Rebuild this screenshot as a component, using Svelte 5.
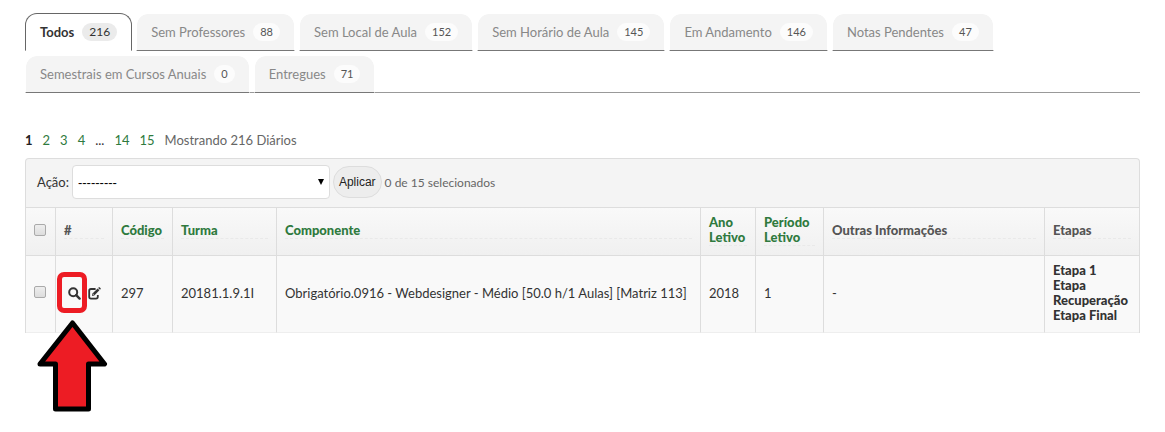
<script lang="ts">
  interface Tab {
    label: string;
    count: number;
  }

  const tabs: Tab[] = [
    { label: 'Todos', count: 216 },
    { label: 'Sem Professores', count: 88 },
    { label: 'Sem Local de Aula', count: 152 },
    { label: 'Sem Horário de Aula', count: 145 },
    { label: 'Em Andamento', count: 146 },
    { label: 'Notas Pendentes', count: 47 },
    { label: 'Semestrais em Cursos Anuais', count: 0 },
    { label: 'Entregues', count: 71 }
  ];

  const columns = [
    { key: 'codigo', label: 'Código', sortable: true },
    { key: 'turma', label: 'Turma', sortable: true },
    { key: 'componente', label: 'Componente', sortable: true },
    { key: 'ano', label: 'Ano Letivo', sortable: true },
    { key: 'periodo', label: 'Período Letivo', sortable: true },
    { key: 'outras', label: 'Outras Informações', sortable: false },
    { key: 'etapas', label: 'Etapas', sortable: false }
  ];

  const diarios = [
    {
      codigo: '297',
      turma: '20181.1.9.1I',
      componente: 'Obrigatório.0916 - Webdesigner - Médio [50.0 h/1 Aulas] [Matriz 113]',
      ano: '2018',
      periodo: '1',
      outras: '-',
      etapas: ['Etapa 1', 'Etapa Recuperação', 'Etapa Final']
    }
  ];

  const pages = ['2', '3', '4', '...', '14', '15'];

  let activeTab = $state('Todos');
</script>

<main class="page">
  <nav class="tabs" aria-label="Situação">
    {#each tabs as tab}
      <a
        class="tab"
        class:active={activeTab === tab.label}
        href="#tab"
        onclick={(e) => { e.preventDefault(); activeTab = tab.label; }}
      >
        {tab.label}
        <span class="count">{tab.count}</span>
      </a>
    {/each}
  </nav>

  <div class="paginator">
    <strong>1</strong>
    {#each pages as page}
      {#if page === '...'}
        <span>...</span>
      {:else}
        <a href="?p={page}">{page}</a>
      {/if}
    {/each}
    <span class="total">Mostrando 216 Diários</span>
  </div>

  <form class="results" onsubmit={(e) => e.preventDefault()}>
    <div class="actions">
      <label for="action">Ação:</label>
      <span class="select-box">
        <select id="action">
          <option>---------</option>
        </select>
      </span>
      <button type="submit">Aplicar</button>
      <span class="selected">0 de 15 selecionados</span>
    </div>

    <table>
      <colgroup>
        <col class="c-check" />
        <col class="c-tools" />
        <col class="c-codigo" />
        <col class="c-turma" />
        <col class="c-componente" />
        <col class="c-ano" />
        <col class="c-periodo" />
        <col class="c-outras" />
        <col class="c-etapas" />
      </colgroup>
      <thead>
        <tr>
          <th class="check"><input type="checkbox" aria-label="Selecionar todos" /></th>
          <th><div class="head">#</div></th>
          {#each columns as column}
            <th>
              <div class="head">
                {#if column.sortable}
                  <a href="?o={column.key}">{column.label}</a>
                {:else}
                  {column.label}
                {/if}
              </div>
            </th>
          {/each}
        </tr>
      </thead>
      <tbody>
        {#each diarios as diario, i}
          <tr>
            <td class="check"><input type="checkbox" aria-label="Selecionar diário {diario.codigo}" /></td>
            <td class="tools">
              <div class="icons">
                <a href="#ver" aria-label="Visualizar">
                  <svg width="13" height="13" viewBox="0 0 13 13" fill="none" stroke="currentColor">
                    <circle cx="5.2" cy="5.2" r="4" stroke-width="2" />
                    <path d="M8.2 8.2L11.6 11.6" stroke-width="2.4" stroke-linecap="round" />
                  </svg>
                </a>
                <a href="#editar" aria-label="Editar">
                  <svg width="13" height="13" viewBox="0 0 13 13" fill="none" stroke="currentColor">
                    <path d="M7.6 2H3Q1.2 2 1.2 3.8V9.8Q1.2 11.6 3 11.6H8Q9.8 11.6 9.8 9.8V8" stroke-width="1.8" />
                    <path d="M4 9L4.5 6.6L9.6 1.5L11.4 3.3L6.3 8.5Z" fill="currentColor" stroke="none" />
                    <path d="M5.2 7L6.1 7.9" stroke="#f9f9f9" stroke-width="0.8" />
                    <path d="M10.2 0.9L10.8 0.3Q11.2 0 11.6 0.3L12.6 1.3Q12.9 1.7 12.6 2.1L12 2.7Z" fill="currentColor" stroke="none" />
                  </svg>
                </a>
              </div>
              {#if i === 0}
                <span class="mark"></span>
                <svg class="arrow" width="72" height="93" viewBox="0 0 72 93">
                  <path d="M36.5 4L68.5 45H52.5V90H19.5V45H4Z" fill="#ed1c24" stroke="#000" stroke-width="5" stroke-linejoin="round" />
                </svg>
              {/if}
            </td>
            <td>{diario.codigo}</td>
            <td>{diario.turma}</td>
            <td>{diario.componente}</td>
            <td>{diario.ano}</td>
            <td>{diario.periodo}</td>
            <td>{diario.outras}</td>
            <td class="etapas">
              {#each diario.etapas as etapa}
                <div>{etapa}</div>
              {/each}
            </td>
          </tr>
        {/each}
      </tbody>
    </table>
  </form>
</main>

<style>
  :global(body) {
    margin: 0;
    background: #fff;
  }

  .page {
    padding: 13px 25px 90px;
    font-family: Lato, "Liberation Sans", sans-serif;
    font-size: 13px;
    line-height: 15px;
    color: #333;
  }

  a {
    color: #2f7a3e;
    text-decoration: none;
  }

  .tabs {
    display: flex;
    flex-wrap: wrap;
    gap: 4px;
    margin-bottom: 40px;
    box-shadow: inset 0 -1px #999;
  }

  .tab {
    box-sizing: border-box;
    display: flex;
    align-items: center;
    gap: 8px;
    height: 38px;
    padding: 0 14px;
    border: 1px solid #fff;
    border-bottom-color: #777;
    border-radius: 12px 12px 0 0;
    background: #f4f4f4;
    background-clip: padding-box;
    color: #888;
  }

  .tab.active {
    border-color: #666;
    border-bottom-color: #fff;
    background: #fff;
    color: #333;
    font-weight: bold;
  }

  .count {
    padding: 0 7px;
    border-radius: 9px;
    background: #fcfcfc;
    color: #555;
    font-size: 11px;
    font-weight: normal;
    line-height: 18px;
  }

  .active .count {
    background: #ebebeb;
    color: #333;
    font-size: 12px;
  }

  .paginator {
    display: flex;
    gap: 10px;
    margin-bottom: 10px;
  }

  .paginator strong {
    color: #222;
  }

  .total {
    color: #666;
  }

  .results {
    border: 1px solid #ddd;
    border-bottom: 0;
    border-radius: 4px 4px 0 0;
    background: #f4f4f4;
  }

  .actions {
    display: flex;
    align-items: center;
    gap: 3px;
    padding: 6px 11px 8px;
  }

  .select-box {
    position: relative;
    width: 258px;
  }

  .select-box::after {
    content: "";
    position: absolute;
    right: 6px;
    top: 14px;
    border: 3px solid transparent;
    border-top: 6px solid #000;
    border-bottom: 0;
    pointer-events: none;
  }

  select {
    appearance: none;
    display: block;
    box-sizing: border-box;
    width: 100%;
    height: 34px;
    padding: 0 5px;
    border: 1px solid #ddd;
    border-radius: 4px;
    background: #fff;
    color: #000;
    font-family: "Liberation Sans", Arial, sans-serif;
    font-size: 13px;
  }

  button {
    height: 32px;
    padding: 0 5px;
    border: 1px solid #ddd;
    border-radius: 16px;
    background: #ededed;
    color: #222;
    font-family: "Liberation Sans", Arial, sans-serif;
    font-size: 12px;
  }

  .selected {
    color: #666;
    font-size: 12px;
  }

  table {
    width: 100%;
    table-layout: fixed;
    border-collapse: separate;
    border-spacing: 0;
    border-top: 1px solid #ddd;
  }

  .c-check {
    width: 30px;
  }

  .c-tools {
    width: 57px;
  }

  .c-codigo {
    width: 60px;
  }

  .c-turma {
    width: 104px;
  }

  .c-componente {
    width: 424px;
  }

  .c-ano {
    width: 55px;
  }

  .c-periodo {
    width: 68px;
  }

  .c-etapas {
    width: 94px;
  }

  th,
  td {
    box-sizing: border-box;
    padding: 7px 8px 9px;
    border-right: 1px solid #ddd;
    text-align: left;
    vertical-align: middle;
  }

  th:last-child,
  td:last-child {
    border-right: 0;
  }

  th {
    height: 48px;
    border-bottom: 1px solid #ddd;
    background: linear-gradient(#f9f9f9, #f0f0f0);
    color: #555;
    font-weight: 900;
  }

  td {
    height: 77px;
    border-bottom: 1px solid #eee;
    background: #f9f9f9;
  }

  .check {
    padding-bottom: 11px;
  }

  .head {
    border-bottom: 1px dashed #e9e9e9;
  }

  .etapas {
    font-weight: 900;
  }

  input {
    appearance: none;
    display: block;
    box-sizing: border-box;
    width: 12px;
    height: 12px;
    margin: 0;
    border: 1px solid #aaa;
    border-radius: 2px;
    background: linear-gradient(#eee, #ddd);
  }

  .icons {
    display: flex;
    gap: 7px;
    padding-left: 4px;
  }

  .icons a,
  .icons svg {
    display: block;
    color: #333;
  }

  .tools {
    position: relative;
  }

  /* highlight around the first row's view icon */
  .mark {
    position: absolute;
    box-sizing: border-box;
    left: 1px;
    top: 16px;
    width: 30px;
    height: 41px;
    border: 5px solid #ed1c24;
    border-radius: 7px;
  }

  .arrow {
    position: absolute;
    left: -20px;
    top: 63px;
  }
</style>
